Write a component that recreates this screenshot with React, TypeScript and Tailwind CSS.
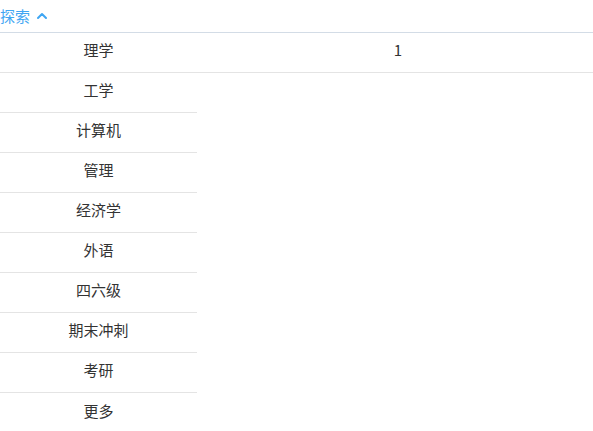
import { ChevronUp } from 'lucide-react';

const subjects = ['理学', '工学', '计算机', '管理', '经济学', '外语', '四六级', '期末冲刺', '考研', '更多'];

export default function App() {
  return (
    <div
      className="w-[593px] h-[431px] overflow-hidden bg-white text-[15px] text-[#333]"
      style={{ fontFamily: '"Noto Sans CJK SC", "Noto Sans", sans-serif' }}
    >
      <div className="h-[33px] border-b border-[#d3dce6] flex items-center gap-1 text-[#3fa6f3] pb-[2px]">
        <span className="leading-none">探索</span>
        <ChevronUp size={16} strokeWidth={3} className="mt-[1px]" />
      </div>
      <div className="flex flex-col">
        {subjects.map((name, i) => (
          <div key={name} className={`flex h-10 ${i === 0 ? 'border-b border-[#e4e4e4]' : ''}`}>
            <div
              className={`w-[197px] flex items-center justify-center pb-[4px] ${
                i > 0 && i < subjects.length - 1 ? 'border-b border-[#e4e4e4]' : ''
              }`}
            >
              {name}
            </div>
            {i === 0 && <div className="flex-1 flex items-center justify-center pb-[4px] pl-[6px]">1</div>}
          </div>
        ))}
      </div>
    </div>
  );
}
